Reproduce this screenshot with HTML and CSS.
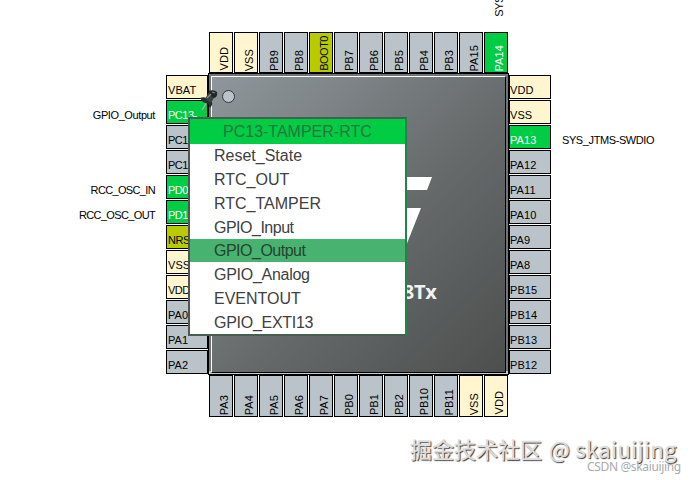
FILE: index.html
```
<!DOCTYPE html>
<html lang="en">
<head>
<meta charset="utf-8">
<title>Pinout view</title>
<link rel="stylesheet" href="styles.css">
</head>
<body>
<main class="board">
  <div class="signals left-signals">
    <span></span><span><b class="s1">GPIO_Output</b></span><span></span><span></span><span><b class="s2">RCC_OSC_IN</b></span><span><b class="s3">RCC_OSC_OUT</b></span>
  </div>
  <div class="top-signal"><span>SYS_JTCK-SWCLK</span></div>
  <div class="pins top">
    <div class="pin power"><span>VDD</span></div><div class="pin power"><span>VSS</span></div><div class="pin"><span>PB9</span></div><div class="pin"><span>PB8</span></div><div class="pin boot"><span class="tight">BOOT0</span></div><div class="pin"><span>PB7</span></div><div class="pin"><span>PB6</span></div><div class="pin"><span>PB5</span></div><div class="pin"><span>PB4</span></div><div class="pin"><span>PB3</span></div><div class="pin"><span>PA15</span></div><div class="pin used"><span>PA14</span></div>
  </div>
  <div class="pins left">
    <div class="pin power"><span>VBAT</span></div><div class="pin used"><span class="tight">PC13-</span></div><div class="pin"><span class="tight">PC14-</span></div><div class="pin"><span class="tight">PC15-</span></div><div class="pin used"><span class="tight">PD0-</span></div><div class="pin used"><span class="tight">PD1-</span></div><div class="pin boot"><span class="tight">NRST</span></div><div class="pin power"><span>VSSA</span></div><div class="pin power"><span class="tight">VDDA</span></div><div class="pin"><span>PA0</span></div><div class="pin"><span>PA1</span></div><div class="pin"><span>PA2</span></div>
  </div>
  <div class="chip">
    <div class="face">
      <svg class="logo" viewBox="0 0 120 74" width="120" height="74"><path d="M24 0H120L115 13H42L56 31H109L92 74H50L66 46H0Z" fill="#fff"/></svg>
      <div class="model">STM32F103C8Tx</div>
    </div>
    <i class="mark"></i>
  </div>
  <div class="pins right">
    <div class="pin power"><span>VDD</span></div><div class="pin power"><span>VSS</span></div><div class="pin used"><span>PA13</span></div><div class="pin"><span>PA12</span></div><div class="pin"><span>PA11</span></div><div class="pin"><span>PA10</span></div><div class="pin"><span>PA9</span></div><div class="pin"><span>PA8</span></div><div class="pin"><span>PB15</span></div><div class="pin"><span>PB14</span></div><div class="pin"><span>PB13</span></div><div class="pin"><span>PB12</span></div>
  </div>
  <div class="signals right-signals"><span></span><span></span><span><b class="s4">SYS_JTMS-SWDIO</b></span></div>
  <div class="pins bottom">
    <div class="pin"><span>PA3</span></div><div class="pin"><span>PA4</span></div><div class="pin"><span>PA5</span></div><div class="pin"><span>PA6</span></div><div class="pin"><span>PA7</span></div><div class="pin"><span>PB0</span></div><div class="pin"><span>PB1</span></div><div class="pin"><span>PB2</span></div><div class="pin"><span>PB10</span></div><div class="pin"><span>PB11</span></div><div class="pin power"><span>VSS</span></div><div class="pin power"><span>VDD</span></div>
  </div>
</main>
<svg class="pushpin" viewBox="0 0 20 22" width="20" height="22">
  <path d="M7 13L2 21" stroke="#a8aeb0" stroke-width="1.4"/>
  <path d="M0 9Q5 7 11 11Q14 15 10 19L8 15L3 13Z" fill="#292c2d"/>
  <path d="M5 10L9 3L15 7L11 14Z" fill="#3c4041"/>
  <path d="M8 2Q14 0 17 3Q18 8 14 9Q10 7 8 2Z" fill="#242728"/>
  <path d="M7 9L11 5M12 3L15 4" stroke="#858b8d" stroke-width="1.2"/>
</svg>
<ul class="menu">
  <li class="title">PC13-TAMPER-RTC</li><li>Reset_State</li><li>RTC_OUT</li><li>RTC_TAMPER</li><li class="io">GPIO_Input</li><li class="io active">GPIO_Output</li><li class="io wide">GPIO_Analog</li><li>EVENTOUT</li><li class="io wide">GPIO_EXTI13</li>
</ul>
<div class="watermark">掘金技术社区 <span>@ skaiuijing</span></div>
<div class="credit">CSDN @skaiuijing</div>
</body>
</html>
```
FILE: styles.css
```
body {
  margin: 0;
  width: 693px;
  height: 480px;
  overflow: hidden;
  position: relative;
  background: #fff;
  color: #000;
  font: 11px/13px "Liberation Sans", sans-serif;
}
.board {
  display: grid;
  grid-template-columns: 166px 42px 301px 42px 142px;
  grid-template-rows: 32px 41px 302px 42px;
}
.top-signal {
  grid-area: 1 / 3;
  display: flex;
  justify-content: flex-end;
  align-items: flex-end;
  padding: 0 3px 15px 0;
  height: 17px;
  letter-spacing: -.4px;
}
.top-signal span, .top span, .bottom span {
  writing-mode: vertical-rl;
  transform: rotate(180deg);
  white-space: nowrap;
}
.pins { display: flex; gap: 1px; }
.top { grid-area: 2 / 3; padding-left: 1px; }
.bottom { grid-area: 4 / 3; padding-left: 1px; }
.left { grid-area: 3 / 2; flex-direction: column; padding-top: 2px; }
.right { grid-area: 3 / 4; flex-direction: column; padding-top: 2px; }
.pin {
  box-sizing: border-box;
  width: 24px;
  border: 1px solid #000;
  background: #b9c3c9;
  display: flex;
  align-items: flex-end;
  letter-spacing: .1px;
}
.pin .tight { letter-spacing: -.5px; }
.left .pin, .right .pin {
  width: 42px;
  height: 24px;
  padding: 0 0 1px 1px;
  overflow: hidden;
}
.right .pin { padding-left: 0; }
.top .pin, .bottom .pin {
  justify-content: flex-end;
  padding: 0 1px 1px 0;
}
.bottom .pin { height: 42px; }
.pin.power { background: #fff5cf; }
.pin.boot { background: #b9cb00; }
.pin.used { background: #00cc44; color: #fff; }
.signals { display: flex; flex-direction: column; gap: 1px; padding-top: 2px; letter-spacing: -.4px; }
.signals > span { height: 24px; display: flex; align-items: flex-end; padding-bottom: 2px; box-sizing: border-box; }
.signals b { font-weight: normal; }
.signals .s2, .signals .s3 { letter-spacing: -.65px; }
.left-signals { grid-area: 3 / 1; align-items: flex-end; padding-right: 11px; }
.right-signals { grid-area: 3 / 5; padding-left: 11px; }
.chip {
  grid-area: 3 / 3;
  position: relative;
  box-sizing: border-box;
  border: 1px solid #000;
  background: linear-gradient(#707678 0 297px, #c5cacc 297px 300px);
  padding: 2px;
}
.face {
  box-sizing: border-box;
  height: 297px;
  border: 1px solid;
  border-color: #fff #000 #000 #fff;
  background: linear-gradient(135deg, #8f979c 0%, #7d8386 25%, #666a6b 55%, #4c4f4d 100%);
  display: flex;
  flex-direction: column;
  align-items: center;
  padding-top: 100px;
}
.logo { margin-left: 26px; }
.model { margin-top: 29px; color: #f2f2f2; font: bold 20px/24px "Noto Sans", sans-serif; }
.mark {
  position: absolute;
  left: 13px;
  top: 16px;
  width: 11px;
  height: 11px;
  border: 1px solid #30383b;
  border-radius: 50%;
  background: #b9c3c9;
}
.pushpin { position: absolute; left: 200px; top: 89px; }
.menu {
  position: absolute;
  left: 188px;
  top: 117px;
  width: 219px;
  height: 219px;
  box-sizing: border-box;
  margin: 0;
  padding: 0;
  list-style: none;
  border: 2px solid #46604f;
  border-left-color: #515654;
  border-right-color: #218449;
  background: #fff;
  color: #404040;
  font-size: 16px;
  line-height: 24px;
}
.menu li { height: 24px; padding-left: 24px; }
.menu .title { height: 25px; line-height: 26px; padding-left: 33px; background: #00cc44; color: #28733e; }
.menu .io { letter-spacing: -.5px; }
.menu .wide { letter-spacing: -.28px; }
.menu .active { height: 23px; margin-top: -1px; margin-bottom: 1px; background: #48b270; color: #24442f; }
.watermark {
  position: absolute;
  left: 410px;
  top: 432px;
  font: 22px/32px "Noto Sans CJK SC", sans-serif;
  color: #dedede;
  -webkit-text-stroke: .3px #dedede;
  text-shadow: 1px 1px 1px #222;
  white-space: nowrap;
}
.watermark span { letter-spacing: .35px; margin-left: 2px; }
.credit {
  position: absolute;
  left: 587px;
  top: 459px;
  font: 12px/16px "Noto Sans", sans-serif;
  letter-spacing: -.35px;
  color: #aaa;
  white-space: nowrap;
}
```
